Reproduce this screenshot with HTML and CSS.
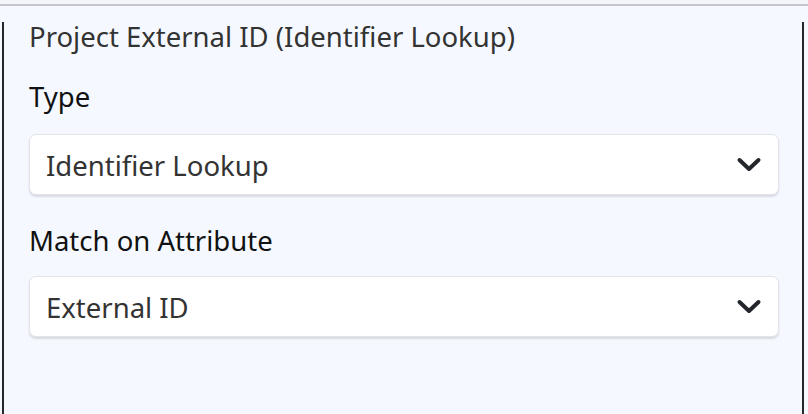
FILE: index.html
```html
<!DOCTYPE html>
<html>
<head>
<meta charset="utf-8">
<link rel="stylesheet" href="styles.css">
</head>
<body>
<div class="topbar"></div>
<div class="page">
  <section class="panel">
    <h2 class="title">Project External ID (Identifier Lookup)</h2>
    <div class="field field-first">
      <label class="label">Type</label>
      <div class="select">
        <span class="value">Identifier Lookup</span>
        <svg class="chev" width="26" height="18" viewBox="0 0 26 18"><path d="M3.5 4 L13 13 L22.5 4" fill="none" stroke="#23262b" stroke-width="4" stroke-linecap="round" stroke-linejoin="round"/></svg>
      </div>
    </div>
    <div class="field">
      <label class="label">Match on Attribute</label>
      <div class="select">
        <span class="value">External ID</span>
        <svg class="chev" width="26" height="18" viewBox="0 0 26 18"><path d="M3.5 4 L13 13 L22.5 4" fill="none" stroke="#23262b" stroke-width="4" stroke-linecap="round" stroke-linejoin="round"/></svg>
      </div>
    </div>
  </section>
</div>
</body>
</html>
```
FILE: styles.css
```css
* { box-sizing: border-box; }
html, body { margin: 0; padding: 0; }
body {
  width: 808px;
  height: 414px;
  overflow: hidden;
  background: #f5f9ff;
  font-family: "Noto Sans", "Open Sans", sans-serif;
}
.topbar {
  height: 6px;
  background: #f3f5f8;
  border-bottom: 2px solid #c3c7cd;
}
.page {
  padding: 16px 4px 0 2px;
}
.panel {
  border-left: 2px solid #23262b;
  border-right: 2px solid #23262b;
  height: 400px;
  padding: 0 23px 0 25px;
}
.title {
  margin: 0;
  font-weight: 400;
  font-size: 27.5px;
  line-height: 30px;
  color: #333;
}
.field {
  display: flex;
  flex-direction: column;
  margin-top: 31px;
}
.field-first {
  margin-top: 30px;
}
.label {
  font-size: 27.5px;
  line-height: 30px;
  color: #111;
  margin-bottom: 20px;
}
.field-first .label {
  margin-bottom: 22px;
}
.select {
  height: 61px;
  background: #fff;
  border: 1px solid #e2e4e8;
  border-radius: 7px;
  box-shadow: 0 2px 2px rgba(0,0,0,0.12);
  display: flex;
  align-items: center;
  justify-content: space-between;
  padding: 2px 16px 0 16px;
}
.value {
  font-size: 27.5px;
  color: #333;
}
.chev { display: block; margin-top: -2px; }
```
